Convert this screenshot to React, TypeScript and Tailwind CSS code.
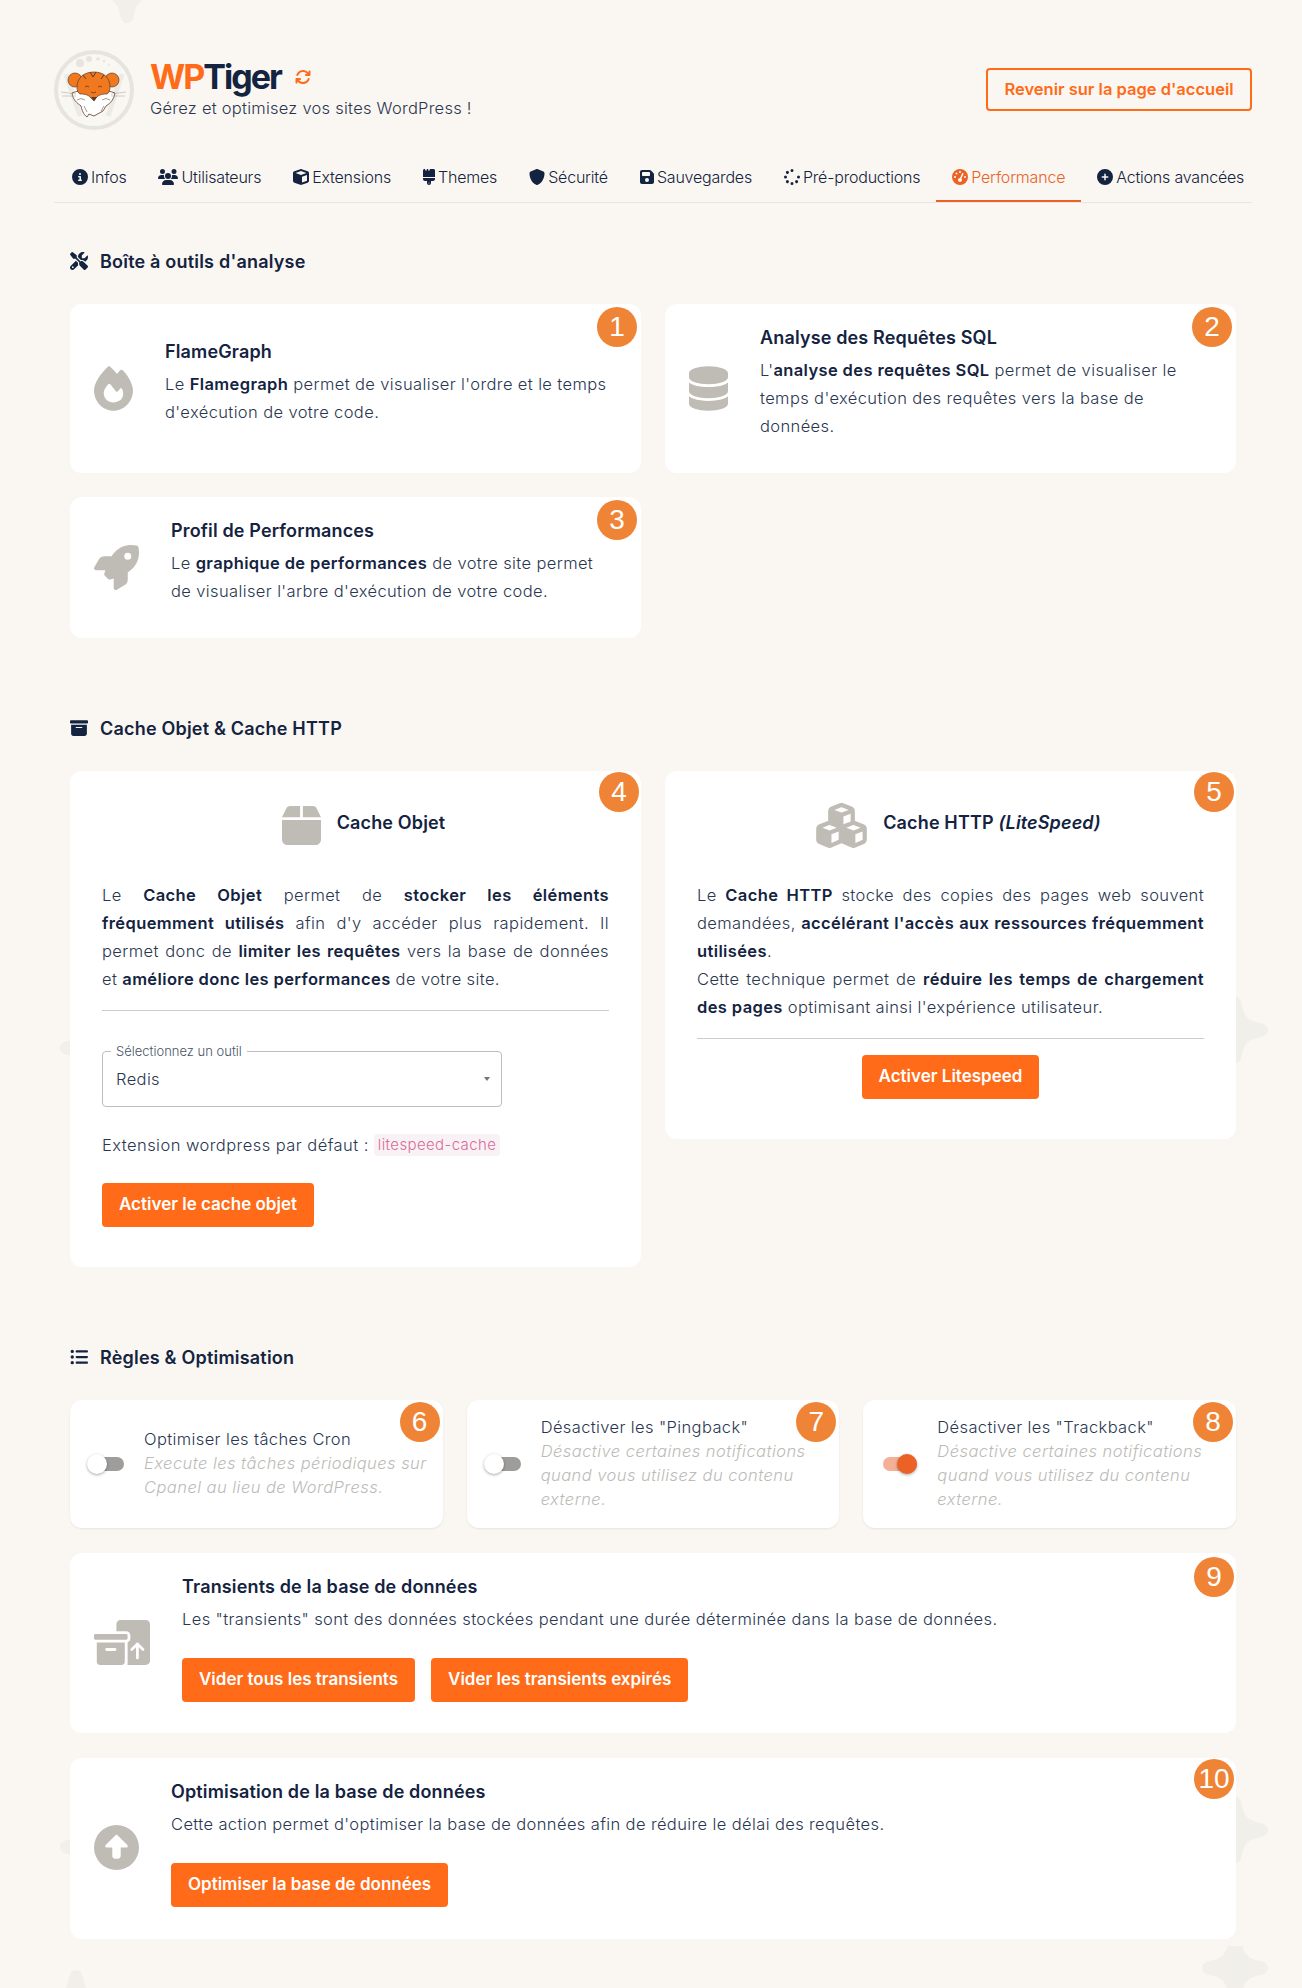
import React from 'react';
import {
  FaArrowsRotate,
  FaBox,
  FaBoxArchive,
  FaBoxesPacking,
  FaBrush,
  FaCircleInfo,
  FaCirclePlus,
  FaCircleUp,
  FaCube,
  FaCubes,
  FaDatabase,
  FaFire,
  FaFloppyDisk,
  FaGaugeHigh,
  FaListUl,
  FaRocket,
  FaScrewdriverWrench,
  FaShield,
  FaSpinner,
  FaUsers,
} from 'react-icons/fa6';

type IconType = React.ComponentType<{ className?: string }>;

const bodyText = 'text-[16.5px] tracking-[0.38px] font-light text-[#2a3650]';
const cardTitle = 'text-[18px] tracking-[0.15px] font-semibold text-[#14233f]';
const strong = 'font-semibold text-[#14233f]';

const tabs = [
  { label: 'Infos', icon: FaCircleInfo, size: 'w-4' },
  { label: 'Utilisateurs', icon: FaUsers, size: 'w-5' },
  { label: 'Extensions', icon: FaCube, size: 'w-4' },
  { label: 'Themes', icon: FaBrush, size: 'w-3' },
  { label: 'Sécurité', icon: FaShield, size: 'w-4' },
  { label: 'Sauvegardes', icon: FaFloppyDisk, size: 'w-[14px]' },
  { label: 'Pré-productions', icon: FaSpinner, size: 'w-4' },
  { label: 'Performance', icon: FaGaugeHigh, size: 'w-4', active: true },
  { label: 'Actions avancées', icon: FaCirclePlus, size: 'w-4' },
];

function Star({ className }: { className: string }) {
  return (
    <svg viewBox="0 0 64 64" className={`absolute w-[66px] h-[66px] fill-[#f1efea] ${className}`} aria-hidden="true">
      <path d="M32 0c4 0 6 3 7 9 2 10 6 14 17 16 5 1 8 3 8 7s-3 6-8 7c-11 2-15 6-17 16-1 6-3 9-7 9s-6-3-7-9c-2-10-6-14-17-16-5-1-8-3-8-7s3-6 8-7c11-2 15-6 17-16 1-6 3-9 7-9z" />
    </svg>
  );
}

function Badge({ n, className = 'top-[3px] right-[4px]' }: { n: number; className?: string }) {
  return (
    <div
      className={`absolute ${className} w-10 h-10 rounded-full bg-[#f08436] text-white flex items-center justify-center text-[28px] font-['Liberation_Sans',sans-serif]`}
    >
      {n}
    </div>
  );
}

function Btn({ children }: { children: React.ReactNode }) {
  return (
    <button className="h-11 px-[17px] rounded bg-[#ff6b18] text-white text-[17px] font-semibold whitespace-nowrap">
      {children}
    </button>
  );
}

function SectionTitle({ icon: Icon, children }: { icon: IconType; children: React.ReactNode }) {
  return (
    <h2 className="h-7 flex items-center gap-3 px-4 text-[18px] tracking-[0.2px] font-semibold text-[#14233f]">
      <Icon className="w-[18px] h-[18px]" />
      {children}
    </h2>
  );
}

function ToolCard({
  n,
  icon: Icon,
  iconSize,
  title,
  children,
}: {
  n: number;
  icon: IconType;
  iconSize: string;
  title: string;
  children: React.ReactNode;
}) {
  return (
    <div className="relative bg-white rounded-xl p-6 flex items-center gap-8">
      <Icon className={`${iconSize} h-[45px] shrink-0 text-[#bfbcb6]`} />
      <div>
        <h3 className={`h-5 leading-5 mb-2 ${cardTitle}`}>{title}</h3>
        <p className={`leading-7 mb-[9px] ${bodyText}`}>{children}</p>
      </div>
      <Badge n={n} />
    </div>
  );
}

function Toggle({ on = false }: { on?: boolean }) {
  return (
    <div className="relative w-[37px] h-5 shrink-0">
      <div className={`absolute left-[3px] top-[3px] w-[34px] h-[14px] rounded-full ${on ? 'bg-[#f4b097]' : 'bg-[#9e9d9b]'}`} />
      <div
        className={`absolute top-0 w-5 h-5 rounded-full shadow-[0_1px_3px_rgba(0,0,0,0.35)] ${on ? 'left-[17px] bg-[#eb6126]' : 'left-0 bg-white'}`}
      />
    </div>
  );
}

function OptionCard({ n, title, desc, on }: { n: number; title: string; desc: React.ReactNode; on?: boolean }) {
  return (
    <div className="relative bg-white rounded-xl shadow-[0_1px_2px_rgba(0,0,0,0.08)] h-[128px] pl-[17px] flex items-center gap-5">
      <Toggle on={on} />
      <div className="-mt-[3px] whitespace-nowrap">
        <div className={`leading-6 ${bodyText}`}>{title}</div>
        <div className="leading-6 text-[16.5px] tracking-[0.45px] font-light italic text-[#bdbbb7]">{desc}</div>
      </div>
      <Badge n={n} className="top-[2px] right-[3px]" />
    </div>
  );
}

function TigerLogo() {
  return (
    <svg viewBox="0 0 80 80" className="w-20 h-20 shrink-0" aria-hidden="true">
      <circle cx="40" cy="40" r="38" fill="#f9f7f2" stroke="#e6e4df" strokeWidth="4" />
      <path d="M12 24l14 42M28 24l11 34M68 24L54 66M52 24L41 58" stroke="#eceae5" strokeWidth="5" fill="none" />
      <circle cx="26" cy="13" r="4" fill="#e6e4df" />
      <circle cx="35" cy="9" r="3" fill="#e6e4df" />
      <circle cx="44" cy="9" r="1.8" fill="#e6e4df" />
      <circle cx="50" cy="11" r="1.3" fill="#e6e4df" />
      <circle cx="55" cy="15" r="1" fill="#e6e4df" />
      <path d="M18 43c1 7 5 10 9 13 1 4 2 8 6 11l2-3 5 2 9-5 3-5c5-3 8-7 9-13-8-4-35-4-43 0z" fill="#fff" stroke="#5f3a28" strokeWidth="0.8" />
      <circle cx="21" cy="30" r="7" fill="#f0791f" stroke="#5f3a28" strokeWidth="0.7" />
      <circle cx="58" cy="30" r="7" fill="#f0791f" stroke="#5f3a28" strokeWidth="0.7" />
      <path d="M23 37c0-9 7-15 17-15s16 6 16 15c0 3-1 6-3 7-3 0-8 0-11 4l-2 3-3-3c-3-4-8-4-11-4-2-1-3-4-3-7z" fill="#f0791f" stroke="#5f3a28" strokeWidth="0.7" />
      <path d="M36 22l3 5 3-5M29 25l3 4M50 25l-3 4" stroke="#5f3a28" strokeWidth="1" fill="none" />
      <path d="M31 37q2-2 4 0M44 37q2-2 4 0M37 42q2 2 5 0" stroke="#5f3a28" strokeWidth="0.8" fill="none" />
      <path d="M37 47l3 4 3-4z" fill="#5f3a28" />
      <path d="M23 50q4-3 8 0M48 50q4-3 8 0M30 56l3 6M50 56l-3 5" stroke="#8a6d5c" strokeWidth="0.7" fill="none" />
      <path d="M7 42l15 2M8 46l14 0M72 42l-15 2M71 46l-14 0" stroke="#a89a90" strokeWidth="0.5" />
    </svg>
  );
}

function App() {
  return (
    <div className="relative min-h-[1988px] overflow-hidden bg-[#faf7f2] font-['Inter',sans-serif] text-[#14233f]">
      <Star className="left-[94px] -top-[43px]" />
      <Star className="left-[1202px] top-[997px]" />
      <Star className="left-[1202px] top-[1797px]" />
      <div className="absolute left-[1202px] top-[1946px] w-[66px] h-[42px] overflow-hidden">
        <Star className="left-0 -top-[11px]" />
      </div>
      <Star className="left-[60px] top-[1015px]" />
      <Star className="left-[60px] top-[1814px]" />
      <Star className="left-[43px] top-[1970px]" />

      <div className="relative ml-[54px] w-[1198px] pt-[50px] pb-[49px]">
        {/* Brand */}
        <header className="flex items-center justify-between">
          <div className="flex items-center gap-4">
            <TigerLogo />
            <div>
              <div className="flex items-center gap-[14px] h-[34px]">
                <span className="text-[34px] leading-none font-bold tracking-[-2px]">
                  <span className="text-[#ff6b18]">WP</span>Tiger
                </span>
                <FaArrowsRotate className="w-4 h-4 text-[#ff6b18]" />
              </div>
              <p className="mt-[2px] text-[16.5px] tracking-[0.25px] font-light text-[#2a3650]">Gérez et optimisez vos sites WordPress !</p>
            </div>
          </div>
          <button className="-mt-px h-[43px] w-[266px] rounded border-2 border-[#ff6b18] text-[#ff6b18] text-[16.5px] font-semibold">
            Revenir sur la page d'accueil
          </button>
        </header>

        {/* Tabs */}
        <nav className="mt-6 h-[49px] flex pl-[2px] border-b border-[#e8e6e1]">
          {tabs.map((t) => (
            <div
              key={t.label}
              className={`h-[48px] border-b-2 px-4 flex items-center gap-[3px] text-[16px] font-light tracking-[-0.2px] whitespace-nowrap ${
                t.active ? 'border-[#eb6126] text-[#eb6126]' : 'border-transparent text-[#14233f]'
              }`}
            >
              <t.icon className={`${t.size} h-4`} />
              {t.label}
            </div>
          ))}
        </nav>

        <section className="mt-[44px]">
          <SectionTitle icon={FaScrewdriverWrench}>Boîte à outils d'analyse</SectionTitle>
          <div className="mt-[29px] mx-4 grid grid-cols-2 gap-6">
            <ToolCard n={1} icon={FaFire} iconSize="w-[39px]" title="FlameGraph">
              Le <b className={strong}>Flamegraph</b> permet de visualiser l'ordre et le temps d'exécution de votre code.
            </ToolCard>
            <ToolCard n={2} icon={FaDatabase} iconSize="w-[39px]" title="Analyse des Requêtes SQL">
              L'<b className={strong}>analyse des requêtes SQL</b> permet de visualiser le temps d'exécution des requêtes vers la base de données.
            </ToolCard>
            <ToolCard n={3} icon={FaRocket} iconSize="w-[45px]" title="Profil de Performances">
              Le <b className={strong}>graphique de performances</b> de votre site permet de visualiser l'arbre d'exécution de votre code.
            </ToolCard>
          </div>
        </section>

        <section className="mt-[76px]">
          <SectionTitle icon={FaBoxArchive}>Cache Objet &amp; Cache HTTP</SectionTitle>
          <div className="mt-[29px] mx-4 grid grid-cols-2 gap-6 items-start">
            <div className="relative bg-white rounded-xl px-8 pt-8 pb-10">
              <div className="flex items-center justify-center gap-4 pl-4 h-[45px]">
                <FaBox className="w-[39px] h-[45px] text-[#bfbcb6]" />
                <h3 className={`pb-[6px] ${cardTitle}`}>Cache Objet</h3>
              </div>
              <p className={`mt-[33px] leading-7 text-justify ${bodyText}`}>
                Le <b className={strong}>Cache Objet</b> permet de <b className={strong}>stocker les éléments fréquemment utilisés</b> afin d'y accéder plus rapidement. Il permet donc de <b className={strong}>limiter les requêtes</b> vers la base de données et <b className={strong}>améliore donc les performances</b> de votre site.
              </p>
              <div className="mt-[17px] border-t border-[#cccccc]" />
              <div className="relative mt-10 w-[400px] h-14 rounded border border-[#bdbdbd] flex items-center justify-between pl-[13px] pr-[11px]">
                <span className="absolute -top-[10px] left-[8px] bg-white px-[5px] text-[13px] font-light text-[#4a5468]">Sélectionnez un outil</span>
                <span className={bodyText}>Redis</span>
                <span className="w-0 h-0 border-x-[3.5px] border-x-transparent border-t-[4px] border-t-[#757575]" />
              </div>
              <div className={`mt-[27px] flex items-center h-[22px] whitespace-nowrap ${bodyText}`}>
                <span className="tracking-[0.45px]">Extension wordpress par défaut :</span>
                <code className="ml-[5px] h-[22px] px-1 rounded bg-[#f9f2f4] text-[15px] leading-[22px] font-light text-[#d96b9b] font-['Inter',sans-serif]">litespeed-cache</code>
              </div>
              <div className="mt-[27px]">
                <Btn>Activer le cache objet</Btn>
              </div>
              <Badge n={4} className="top-[1px] right-[2px]" />
            </div>

            <div className="relative bg-white rounded-xl px-8 pt-8 pb-10">
              <div className="flex items-center justify-center gap-4 pl-4 h-[45px]">
                <FaCubes className="w-[51px] h-[45px] text-[#bfbcb6]" />
                <h3 className={`pb-[6px] ${cardTitle}`}>
                  Cache HTTP <i className="font-semibold">(LiteSpeed)</i>
                </h3>
              </div>
              <p className={`mt-[33px] leading-7 text-justify ${bodyText}`}>
                Le <b className={strong}>Cache HTTP</b> stocke des copies des pages web souvent demandées, <b className={strong}>accélérant l'accès aux ressources fréquemment utilisées</b>.
                <br />
                Cette technique permet de <b className={strong}>réduire les temps de chargement des pages</b> optimisant ainsi l'expérience utilisateur.
              </p>
              <div className="mt-[17px] border-t border-[#cccccc]" />
              <div className="mt-4 flex justify-center">
                <Btn>Activer Litespeed</Btn>
              </div>
              <Badge n={5} className="top-[1px] right-[2px]" />
            </div>
          </div>
        </section>

        <section className="mt-[76px]">
          <SectionTitle icon={FaListUl}>Règles &amp; Optimisation</SectionTitle>
          <div className="mt-[29px] mx-4 grid grid-cols-3 gap-6">
            <OptionCard n={6} title="Optimiser les tâches Cron" desc={<>Execute les tâches périodiques sur<br />Cpanel au lieu de WordPress.</>} />
            <OptionCard n={7} title={'Désactiver les "Pingback"'} desc={<>Désactive certaines notifications<br />quand vous utilisez du contenu<br />externe.</>} />
            <OptionCard n={8} on title={'Désactiver les "Trackback"'} desc={<>Désactive certaines notifications<br />quand vous utilisez du contenu<br />externe.</>} />
          </div>

          <div className="mx-4 mt-[25px] relative bg-white rounded-xl h-[180px] px-6 pt-6 flex gap-8">
            <FaBoxesPacking className="w-[56px] h-[45px] shrink-0 mt-[43px] text-[#bfbcb6]" />
            <div>
              <h3 className={`h-5 leading-5 mb-2 ${cardTitle}`}>Transients de la base de données</h3>
              <p className={`leading-7 ${bodyText}`}>
                Les "transients" sont des données stockées pendant une durée déterminée dans la base de données.
              </p>
              <div className="mt-[25px] flex gap-4">
                <Btn>Vider tous les transients</Btn>
                <Btn>Vider les transients expirés</Btn>
              </div>
            </div>
            <Badge n={9} className="top-1 right-[2px]" />
          </div>

          <div className="mx-4 mt-[25px] relative bg-white rounded-xl h-[181px] px-6 pt-6 flex gap-8">
            <FaCircleUp className="w-[45px] h-[45px] shrink-0 mt-[43px] text-[#bfbcb6]" />
            <div>
              <h3 className={`h-5 leading-5 mb-2 ${cardTitle}`}>Optimisation de la base de données</h3>
              <p className={`leading-7 ${bodyText}`}>
                Cette action permet d'optimiser la base de données afin de réduire le délai des requêtes.
              </p>
              <div className="mt-[25px]">
                <Btn>Optimiser la base de données</Btn>
              </div>
            </div>
            <Badge n={10} className="top-[1px] right-[2px]" />
          </div>
        </section>
      </div>
    </div>
  );
}

export default App;
